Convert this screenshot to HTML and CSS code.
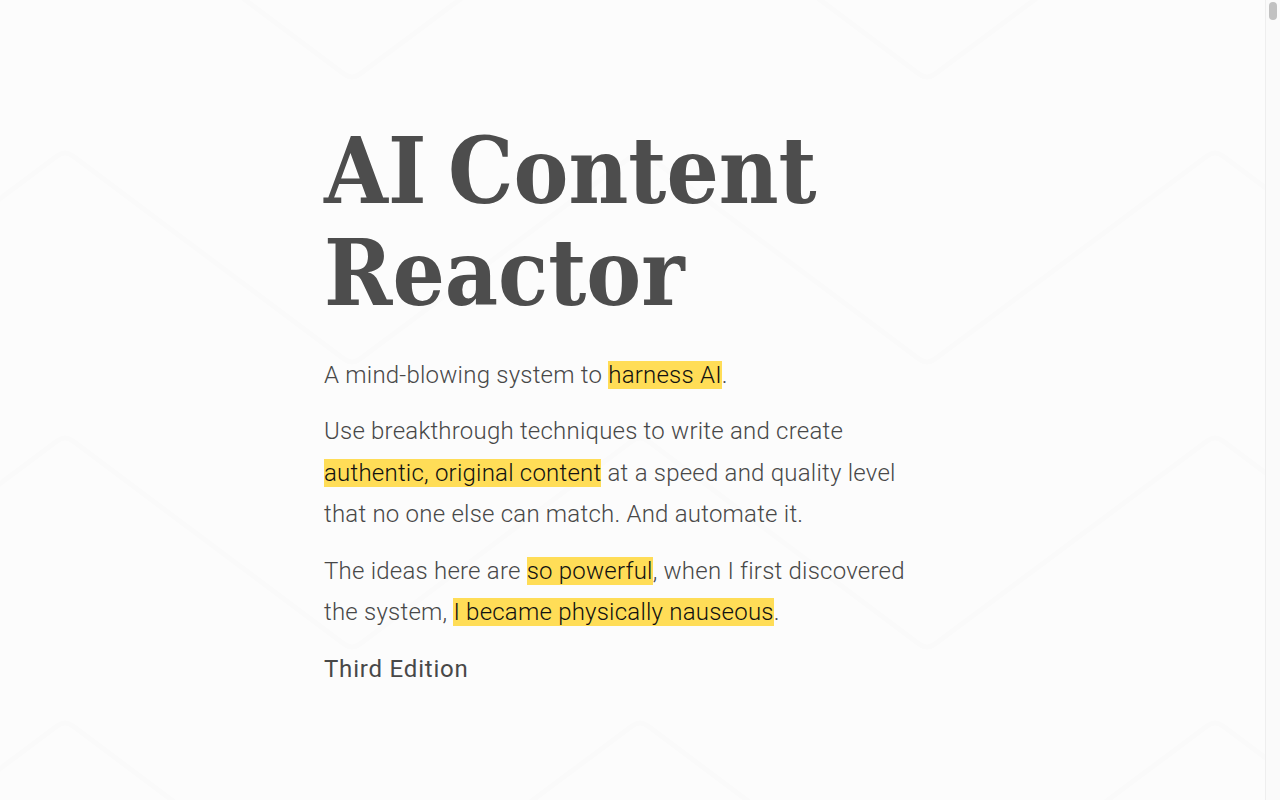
FILE: index.html
```html
<!DOCTYPE html>
<html lang="en">
<head>
    <meta charset="UTF-8">
    <meta name="viewport" content="width=device-width, initial-scale=1.0">
    <title>AI Content Reactor</title>
    <link rel="stylesheet" href="styles.css">
</head>
<body>
    <main class="book">
        <h1 class="title">AI Content Reactor</h1>
        <p>A mind-blowing system to <mark>harness AI</mark>.</p>
        <p>Use breakthrough techniques to write and create <mark>authentic, original content</mark> at a speed and quality level that no one else can match. And automate it.</p>
        <p>The ideas here are <mark>so powerful</mark>, when I first discovered the system, <mark>I became physically nauseous</mark>.</p>
        <p class="edition">Third Edition</p>
    </main>
    <div class="scrollbar"><div class="scrollbar-thumb"></div></div>
</body>
</html>
```

FILE: styles.css
```css
* {
    margin: 0;
    padding: 0;
    box-sizing: border-box;
}
body {
    height: 100vh;
    overflow: hidden;
    padding-right: 15px;
    background-color: #fcfcfc;
    background-image: url("data:image/svg+xml,%3Csvg xmlns='http://www.w3.org/2000/svg' width='575' height='285'%3E%3Cpath d='M-223 365L57 156Q65 150 73 156L344 359Q352 365 360 359L632 156Q640 150 648 156L798 268' fill='none' stroke='%23fafafa' stroke-width='5'/%3E%3Cpath d='M-223 80L57 -129Q65 -135 73 -129L344 74Q352 80 360 74L632 -129Q640 -135 648 -129L798 -17' fill='none' stroke='%23fafafa' stroke-width='5'/%3E%3C/svg%3E");
    color: #484848;
    font-family: Roboto, "Liberation Sans", sans-serif;
}
.book {
    width: 617px;
    margin: 0 auto;
    padding: 120px 20px 0 0;
    font-size: 24px;
    font-weight: 300;
    letter-spacing: 0.22px;
    line-height: 41.4px;
}
.title {
    font-family: "DejaVu Serif Condensed", "DejaVu Serif", serif;
    font-size: 91.5px;
    font-weight: 700;
    letter-spacing: 0;
    word-spacing: -7px;
    line-height: 102px;
    color: #4d4d4d;
    margin-bottom: 31px;
}
.book p {
    margin-bottom: 15px;
}
mark {
    background: #ffdd57;
    color: #111111;
}
.book .edition {
    margin-top: 16px;
    font-weight: 400;
    letter-spacing: 0.8px;
}
.scrollbar {
    position: fixed;
    top: 0;
    right: 0;
    bottom: 0;
    width: 15px;
    padding: 2px 3px 0;
    background: #fafafa;
    border-left: 1px solid #eeeeee;
}
.scrollbar-thumb {
    height: 18px;
    border-radius: 4px;
    background: #c1c1c1;
}
```
